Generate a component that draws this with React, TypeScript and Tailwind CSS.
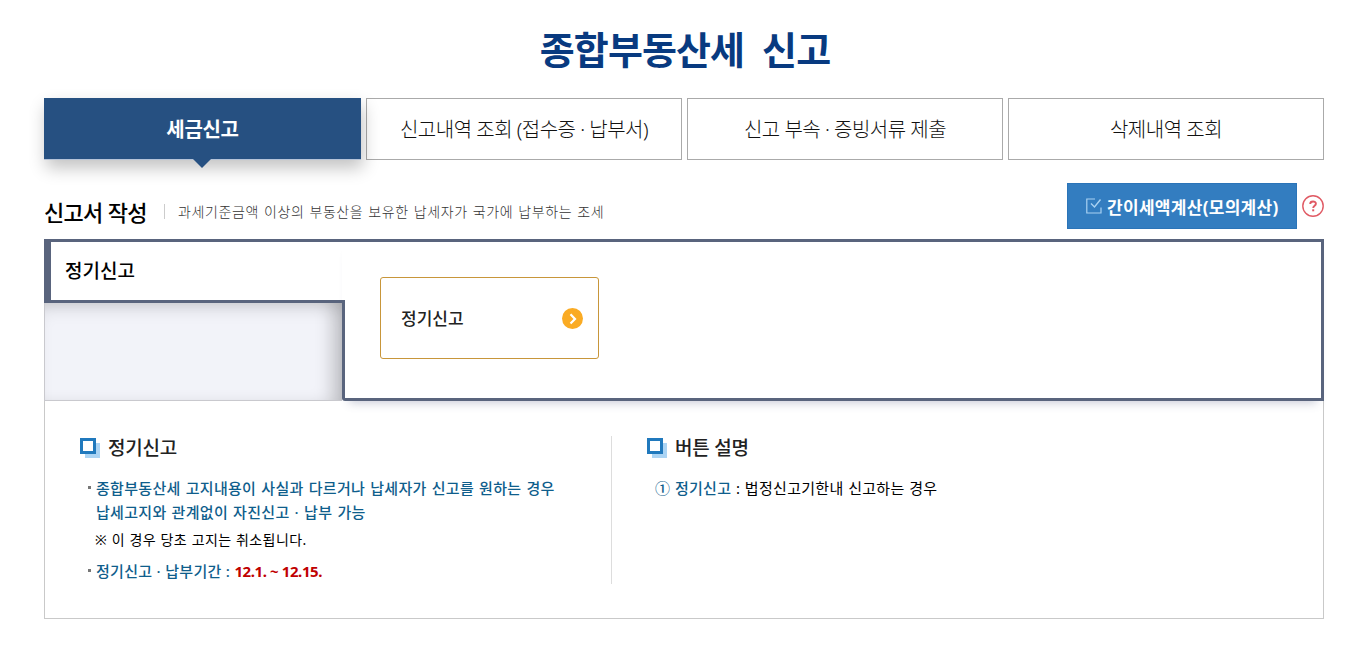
import type { ReactNode } from 'react';

interface Tab {
  label: string;
  active?: boolean;
}

const TABS: Tab[] = [
  { label: '세금신고', active: true },
  { label: '신고내역 조회 (접수증 · 납부서)' },
  { label: '신고 부속 · 증빙서류 제출' },
  { label: '삭제내역 조회' },
];

function TabBar() {
  return (
    <ul className="mt-[22px] grid h-[62px] grid-cols-[317px_316px_316px_316px] gap-[5px] text-[20px] whitespace-nowrap">
      {TABS.map((tab) =>
        tab.active ? (
          <li
            key={tab.label}
            className="relative flex items-center justify-center border-b border-[#b5c3d8] bg-[#265081] pt-[2px] font-bold tracking-[-0.3px] text-white shadow-[2px_8px_16px_rgba(0,0,0,0.24)]"
          >
            {tab.label}
            <svg className="absolute top-[60px] left-[148px]" width="20" height="10" viewBox="0 0 20 10">
              <path d="M0 0H20L10 10Z" fill="#265081" />
            </svg>
          </li>
        ) : (
          <li
            key={tab.label}
            className="flex items-center justify-center border border-[#aaa] pt-[2px] font-light tracking-[-0.5px] text-[#111]"
          >
            {tab.label}
          </li>
        ),
      )}
    </ul>
  );
}

function SquareHeading({ children }: { children: ReactNode }) {
  return (
    <h3 className="flex h-6 items-center text-[19px] font-medium tracking-[-0.2px] text-[#222]">
      <svg className="mr-2 shrink-0" width="20" height="20" viewBox="0 0 20 20">
        <path d="M5 5H20V20H5Z" fill="#abd4f4" />
        <path d="M1.5 1.5H14.5V14.5H1.5Z" fill="#fff" stroke="#2079bd" strokeWidth="3" />
      </svg>
      {children}
    </h3>
  );
}

function Toolbar() {
  return (
    <div className="mt-[23px] flex h-[46px] items-center">
      <h2 className="mt-[13px] w-[102px] text-[22px] font-medium tracking-[-0.7px] whitespace-nowrap text-black">
        신고서 작성
      </h2>
      <span className="mt-[11px] ml-[18px] h-[15px] w-px bg-[#ccc]" />
      <p className="mt-[10px] ml-[13px] text-[14px] font-light tracking-[0.6px] text-[#333] [word-spacing:0.8px]">
        과세기준금액 이상의 부동산을 보유한 납세자가 국가에 납부하는 조세
      </p>
      <button className="ml-auto flex h-[46px] w-[230px] items-center border border-[#2b74b8] bg-[#337dc0] pl-[18px] text-[17px] font-bold tracking-[0.3px] whitespace-nowrap text-white">
        <svg className="mr-[5px]" width="16" height="16" viewBox="0 0 16 16" fill="none" stroke="#a9d2f2">
          <path d="M9 1H.8V15H15V9.5" strokeWidth="1.2" />
          <path d="M5 5.5L8.5 9L14.5 1.5" strokeWidth="1.4" />
        </svg>
        <span className="pt-[3px]">간이세액계산(모의계산)</span>
      </button>
      <svg className="ml-[5px]" width="22" height="22" viewBox="0 0 22 22" fill="none" stroke="#e05a64">
        <circle cx="11" cy="11" r="10.2" strokeWidth="1.4" />
        <path d="M8.2 8.9C8.2 5.6 13.9 5.7 13.9 8.7C13.9 10.7 11.2 10.8 11.2 13" strokeWidth="1.9" />
        <path d="M11.2 14.3V16.3" strokeWidth="2" />
      </svg>
    </div>
  );
}

function ReportPanel() {
  return (
    <div className="mt-[10px] flex h-[162px]">
      <div className="flex w-[298px] flex-col">
        <div className="flex h-16 items-center border-t-3 border-b-3 border-l-7 border-[#59647d] pt-px pl-[14px] text-[19px] font-medium text-black">
          정기신고
        </div>
        <div className="flex-1 border-b border-l border-[#c9c9ce] bg-[#f2f3f9] shadow-[inset_-17px_0_18px_-8px_rgba(0,0,0,0.22),inset_0_14px_18px_-10px_rgba(0,0,0,0.15)]" />
      </div>
      <div className="flex flex-1 rounded-bl-[3px] border-t-3 border-r-3 border-b-3 border-[#59647d] bg-white shadow-[0_9px_9px_-7px_rgba(80,90,130,0.3)]">
        <div className="mt-[58px] w-[3px] bg-[#59647d]" />
        <button className="mt-[35px] ml-[35px] flex h-[82px] w-[219px] items-center justify-between rounded-[3px] border border-[#c8963a] pr-[15px] pl-5 text-[17px] font-medium text-[#222]">
          <span className="pt-[2px]">정기신고</span>
          <svg width="21" height="21" viewBox="0 0 21 21">
            <circle cx="10.5" cy="10.5" r="10.5" fill="#faab24" />
            <path d="M8.5 6.2L13 11L8.5 15.5" fill="none" stroke="#fff" strokeWidth="2.2" />
          </svg>
        </button>
      </div>
    </div>
  );
}

function Guide() {
  return (
    <div className="flex h-[218px] border-x border-b border-[#c9c9c9] pt-[35px] pl-[35px] text-[15px] tracking-[0.3px]">
      <section className="h-[148px] w-[532px] border-r border-[#ddd]">
        <SquareHeading>정기신고</SquareHeading>
        <ul className="mt-4 ml-2 leading-6 font-medium text-[#0f5e8c]">
          <li className="flex">
            <span className="mt-[10px] mr-[5px] size-[3px] shrink-0 bg-[#777]" />
            <p className="[word-spacing:0.9px]">
              종합부동산세 고지내용이 사실과 다르거나 납세자가 신고를 원하는 경우
              <br />
              납세고지와 관계없이 자진신고 · 납부 가능
            </p>
          </li>
          <li className="mt-1 pl-[7px] text-[14px] font-normal tracking-[0.4px] text-black [word-spacing:0.5px]">
            ※ 이 경우 당초 고지는 취소됩니다.
          </li>
          <li className="mt-[7px] flex">
            <span className="mt-[10px] mr-[5px] size-[3px] shrink-0 bg-[#777]" />
            <p>
              정기신고 · 납부기간 :{' '}
              <strong className="font-bold tracking-[-0.4px] text-[#c00000]">12.1. ~ 12.15.</strong>
            </p>
          </li>
        </ul>
      </section>
      <section className="pl-[35px]">
        <SquareHeading>버튼 설명</SquareHeading>
        <p className="mt-4 pl-2 leading-6 text-black [word-spacing:0.4px]">
          <span className="font-medium text-[#0f5e8c]">① 정기신고</span> : 법정신고기한내 신고하는 경우
        </p>
      </section>
    </div>
  );
}

export default function App() {
  return (
    <main className="h-[649px] overflow-hidden bg-white pt-[22px] pr-[38px] pl-11 font-['Noto_Sans','Noto_Sans_CJK_KR',sans-serif]">
      <h1 className="pl-[2px] text-center text-[38px] leading-[54px] font-bold tracking-[-0.9px] whitespace-pre text-[#083a80]">
        {'종합부동산세  신고'}
      </h1>
      <TabBar />
      <Toolbar />
      <ReportPanel />
      <Guide />
    </main>
  );
}
